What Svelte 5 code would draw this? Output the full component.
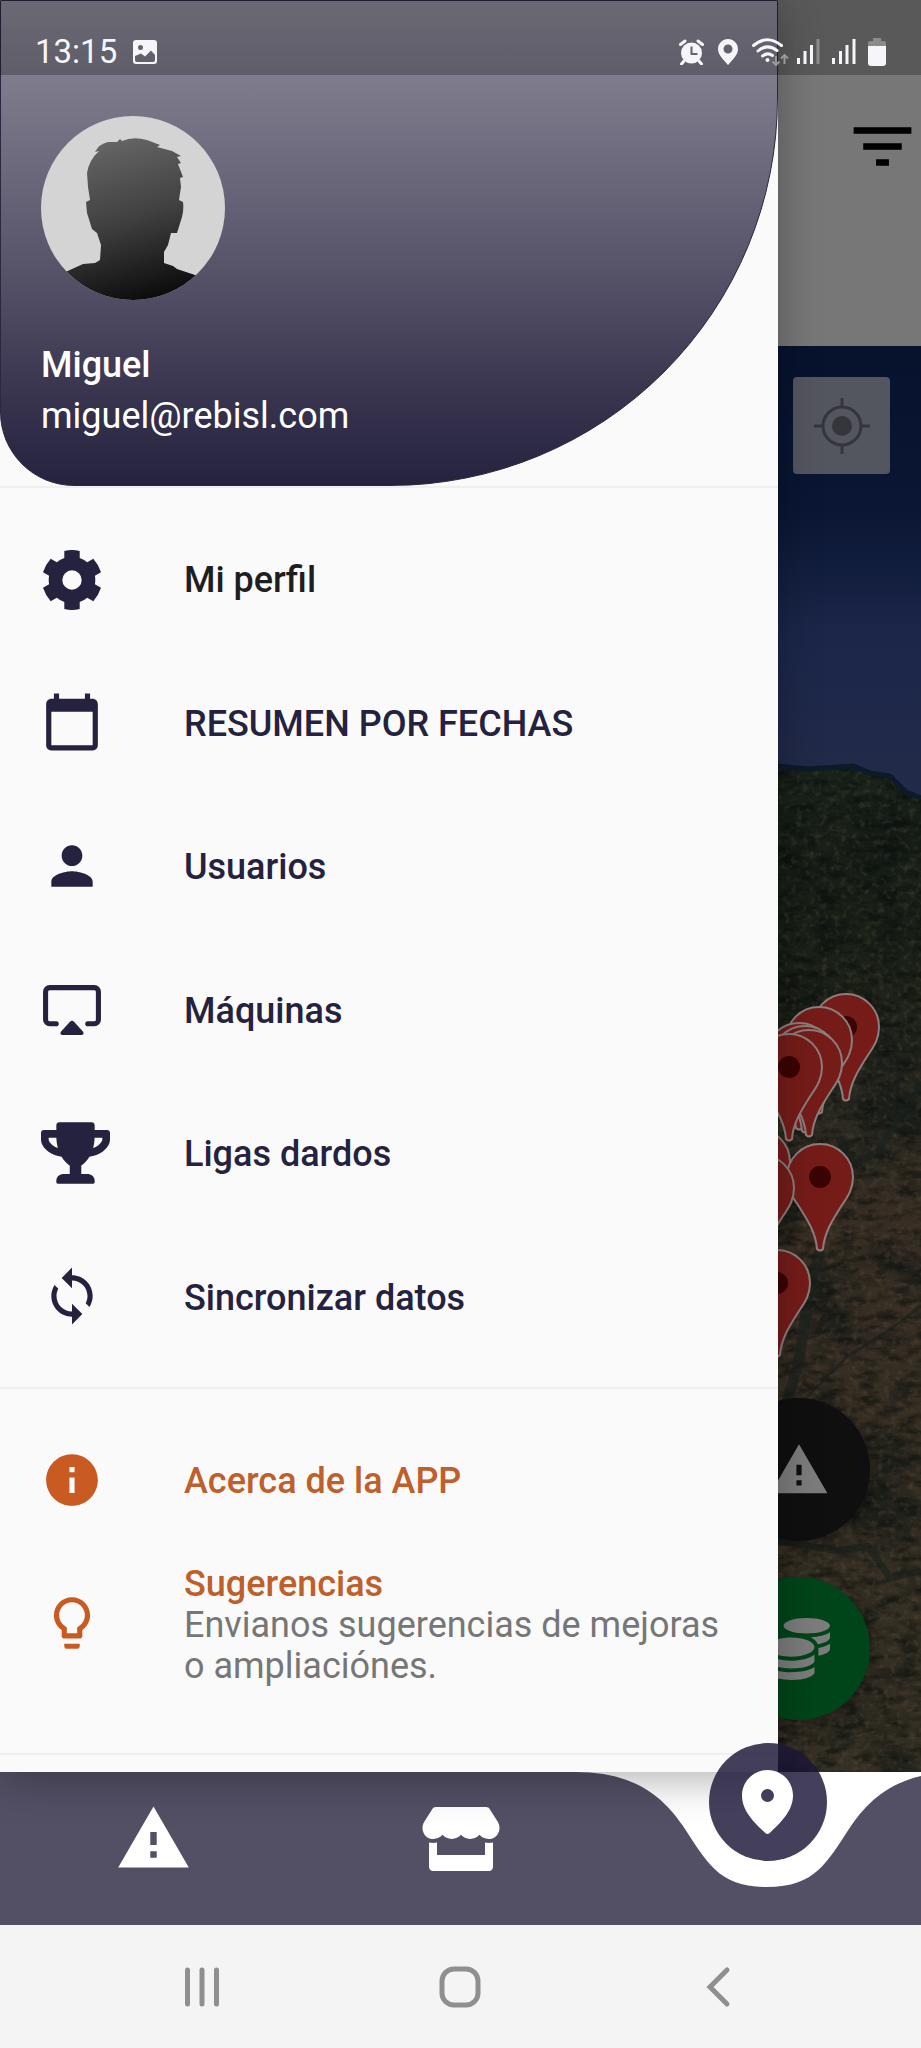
<script lang="ts">
  type Item = {
    title: string;
    icon: string;
    width?: number;
    box?: string;
    outline?: string;
    detail?: string;
    dark?: boolean;
  };

  const user = { name: 'Miguel', email: 'miguel@rebisl.com' };

  const menu: Item[] = [
    {
      title: 'Mi perfil',
      dark: true,
      box: '-1 -1 62 60',
      icon: 'M22.3 1Q30-.8 37.7 1V8A23.3 23.3 0 0 1 45.2 12.3L51.3 8.8Q56.5 14.6 59 22.2L52.9 25.7A23.3 23.3 0 0 1 52.9 34.3L59 37.8Q56.5 45.4 51.3 51.2L45.2 47.7A23.3 23.3 0 0 1 37.7 52V59Q30 60.8 22.3 59V52A23.3 23.3 0 0 1 14.8 47.7L8.7 51.2Q3.5 45.4 1 37.8L7.1 34.3A23.3 23.3 0 0 1 7.1 25.7L1 22.2Q3.5 14.6 8.7 8.8L14.8 12.3A23.3 23.3 0 0 1 22.3 8ZM30 20.3a9.7 9.7 0 1 0 0 19.4 9.7 9.7 0 0 0 0-19.4z',
    },
    {
      title: 'RESUMEN POR FECHAS',
      icon: 'M20 3h-1V1h-2v2H7V1H5v2H4c-1.1 0-2 .9-2 2v16c0 1.1.9 2 2 2h16c1.1 0 2-.9 2-2V5c0-1.1-.9-2-2-2zm0 18H4V8h16v13z',
    },
    {
      title: 'Usuarios',
      icon: 'M12 12c2.21 0 4-1.79 4-4s-1.79-4-4-4-4 1.79-4 4 1.79 4 4 4zm0 2c-2.67 0-8 1.34-8 4v2h16v-2c0-2.66-5.33-4-8-4z',
    },
    {
      title: 'Máquinas',
      box: '-2 -7 61 61',
      outline: 'M13 38H6.5a4 4 0 0 1-4-4V6.5a4 4 0 0 1 4-4h44a4 4 0 0 1 4 4V34a4 4 0 0 1-4 4H44',
      icon: 'M18.5 49Q16 48 18 45.5L26.5 36Q28.5 34 30.5 36L39 45.5Q41 48 38.5 49Z',
    },
    {
      title: 'Ligas dardos',
      width: 69,
      box: '0 0 576 512',
      icon: 'M552 64H448V24c0-13.3-10.7-24-24-24H152c-13.3 0-24 10.7-24 24v40H24C10.7 64 0 74.7 0 88v56c0 35.7 22.5 72.5 61.9 100.7 31.5 22.7 69.8 37.1 110 41.7C203.3 338.5 240 360 240 360v72h-48c-35.3 0-64 20.7-64 56v12c0 6.6 5.4 12 12 12h296c6.6 0 12-5.4 12-12v-12c0-35.3-28.7-56-64-56h-48v-72s36.7-21.5 68.1-73.6c40.3-4.6 78.6-19 110-41.7 39.3-28.2 61.9-65 61.9-100.7V88c0-13.3-10.7-24-24-24zM99.3 192.8C74.9 175.2 64 155.6 64 144v-16h64.2c1 32.6 5.8 61.2 12.8 86.2-15.1-5.2-29.2-12.4-41.7-21.4zM512 144c0 16.1-17.7 36.1-35.3 48.8-12.5 9-26.7 16.2-41.8 21.4 7-25 11.8-53.6 12.8-86.2H512v16z',
    },
    {
      title: 'Sincronizar datos',
      icon: 'M12 4V1L8 5l4 4V6c3.31 0 6 2.69 6 6 0 1.01-.25 1.97-.7 2.8l1.46 1.46C19.54 15.03 20 13.57 20 12c0-4.42-3.58-8-8-8zm0 14c-3.31 0-6-2.69-6-6 0-1.01.25-1.97.7-2.8L5.24 7.74C4.46 8.97 4 10.43 4 12c0 4.42 3.58 8 8 8v3l4-4-4-4v3z',
    },
  ];

  const about: Item[] = [
    {
      title: 'Acerca de la APP',
      icon: 'M12 2C6.48 2 2 6.48 2 12s4.48 10 10 10 10-4.48 10-10S17.52 2 12 2zm1 15h-2v-6h2v6zm0-8h-2V7h2v2z',
    },
    {
      title: 'Sugerencias',
      detail: 'Envianos sugerencias de mejoras o ampliaciónes.',
      icon: 'M9 21c0 .55.45 1 1 1h4c.55 0 1-.45 1-1v-1H9v1zm3-19C8.14 2 5 5.14 5 9c0 2.38 1.19 4.47 3 5.74V17c0 .55.45 1 1 1h6c.55 0 1-.45 1-1v-2.26c1.81-1.27 3-3.36 3-5.74 0-3.86-3.14-7-7-7zm2.85 11.1l-.85.6V16h-4v-2.3l-.85-.6C7.8 12.16 7 10.63 7 9c0-2.76 2.24-5 5-5s5 2.24 5 5c0 1.63-.8 3.16-2.15 4.1z',
    },
  ];

  // tip of each machine marker, back to front
  const pins = [
    { x: 68, y: 755 },
    { x: 41, y: 768 },
    { x: 21, y: 784 },
    { x: 27, y: 787 },
    { x: 31, y: 791 },
    { x: 11, y: 795 },
    { x: -21, y: 890 },
    { x: 42, y: 905 },
    { x: -17, y: 916 },
    { x: -1, y: 1011 },
  ];
  const pinPath =
    'M-3-2C-4-18-13-32-22-46C-29-56-33-63-33-74A33 33 0 0 1 33-74C33-63 29-56 22-46C13-32 4-18 3-2Q0 1-3-2Z';
  const warning = 'M1 21h22L12 2 1 21zm12-3h-2v-2h2v2zm0-4h-2v-4h2v4z';
</script>

{#snippet row(item: Item)}
  <li>
    <a href="#menu" class="row" class:dark={item.dark}>
      <span class="row-icon">
        <svg width={item.width ?? 62} height="62" viewBox={item.box ?? '0 0 24 24'} aria-hidden="true">
          {#if item.outline}
            <path class="line" d={item.outline} />
          {/if}
          <path fill-rule="evenodd" d={item.icon} />
        </svg>
      </span>
      <span class="row-text">
        <span class="row-title">{item.title}</span>
        {#if item.detail}
          <span class="row-detail">{item.detail}</span>
        {/if}
      </span>
    </a>
  </li>
{/snippet}

<div class="app">
  <header class="status">
    <span class="time">13:15</span>
    <svg width="24" height="24" viewBox="0 0 24 24">
      <path fill-rule="evenodd" d="M3 0h18a3 3 0 0 1 3 3v18a3 3 0 0 1-3 3H3a3 3 0 0 1-3-3V3a3 3 0 0 1 3-3zm4.5 5a2.5 2.5 0 1 0 0 5 2.5 2.5 0 0 0 0-5zM2 16v4q0 2 2 2h16q2 0 2-2v-5l-4-4.5-6 6-4-3z" />
    </svg>
    <div class="status-right">
      <svg width="27" height="26" viewBox="0 0 27 26">
        <circle cx="12.5" cy="14" r="10.5" />
        <path class="thick" d="M1.5 5.5 6 2M23.500 5.5 19 2M5 22l-2.5 3M20 22l2.5 3" />
        <path class="cut" d="M12.5 7.5v7.5h6" />
      </svg>
      <svg width="22" height="26" viewBox="0 0 22 26">
        <path fill-rule="evenodd" d="M10 0C4.5 0 0 4.5 0 10c0 6.5 6 11 10 16 4-5 10-9.500 10-16C20 4.5 15.5 0 10 0zm0 5.500a4.500 4.500 0 1 1 0 9 4.500 4.500 0 0 1 0-9z" />
      </svg>
      <svg class="wifi" width="32" height="28" viewBox="0 0 32 28">
        <path class="thick" d="M1.5 7.5Q15 -4 29.5 7.5M6 13Q15 5 25 12.5M10.500 18Q15.500 14 20.500 17.5" />
        <circle cx="15.5" cy="22" r="2" />
        <path class="faded-line" d="M24 18v9M20.500 23.500 24 27l3.500-3.500M32.500 26v-9M29 20.500 32.500 17l3.500 3.500" />
      </svg>
      <svg width="24" height="25" viewBox="0 0 24 25">
        <path d="M1 19h3v6H1zM7.5 12h3v13h-3zM14 6h3v19h-3z" />
        <path class="faded" d="M20.5 0h3v25h-3z" />
      </svg>
      <svg width="24" height="25" viewBox="0 0 24 25">
        <path d="M0 19h3v6H0zM7 12h3v13H7zM13.5 6h3v19h-3zM20.500 0h3v25h-3z" />
      </svg>
      <svg width="18" height="28" viewBox="0 0 18 28">
        <path class="faded" d="M5 0h8v3h3a2 2 0 0 1 2 2v3H0V5a2 2 0 0 1 2-2h3z" />
        <path d="M0 8h18v17a3 3 0 0 1-3 3H3a3 3 0 0 1-3-3z" />
      </svg>
    </div>
  </header>

  <div class="stage">
    <aside class="drawer">
      <div class="head">
        <div class="profile">
          <svg class="avatar" width="184" height="184" viewBox="0 0 184 184" role="img" aria-label={user.name}>
            <defs>
              <linearGradient id="skin" x1=".35" y1="0" x2=".6" y2="1">
                <stop offset="0" stop-color="#666" />
                <stop offset=".5" stop-color="#404040" />
                <stop offset="1" stop-color="#0c0c0c" />
              </linearGradient>
            </defs>
            <rect width="184" height="184" fill="#d3d4d3" />
            <path
              fill="url(#skin)"
              d="M46 57Q48 44 58 35L54 36Q58 28 67 26L76 26 79 23 81 25Q92 20 106 24L119 29 116 31 131 35 140 40 136 41 140 47 137 48 142 61 139 62 140 71 138 84 142 86Q143 94 141 101L136 117H130L127 129 123 136V147L132 150 136 153 160 161V184H20V158L42 148 54 147 59 144 60 129 56 117 51 113 46 97 45 86 49 84 47 71Z"
            />
          </svg>
          <strong>{user.name}</strong>
          <span>{user.email}</span>
        </div>
      </div>
      <ul class="menu">
        {#each menu as item}
          {@render row(item)}
        {/each}
      </ul>
      <ul class="menu about">
        {#each about as item}
          {@render row(item)}
        {/each}
      </ul>
    </aside>

    <main class="screen">
      <div class="toolbar">
        <button aria-label="Filtrar">
          <svg width="77" height="77" viewBox="0 0 24 24"><path d="M10 18h4v-2h-4v2zM3 6v2h18V6H3zm3 7h12v-2H6v2z" /></svg>
        </button>
      </div>
      <div class="map">
        <svg class="terrain" viewBox="0 0 143 1426" preserveAspectRatio="xMinYMin slice" aria-hidden="true">
          <defs>
            <linearGradient id="sea" x1="0" y1="0" x2="0" y2="1">
              <stop offset="0" stop-color="#07122d" />
              <stop offset=".35" stop-color="#0a1633" />
              <stop offset=".62" stop-color="#1b2649" />
              <stop offset="1" stop-color="#242b49" />
            </linearGradient>
            <linearGradient id="land" x1="0" y1="0" x2="0" y2="1">
              <stop offset="0" stop-color="#18221a" />
              <stop offset=".2" stop-color="#1b2117" />
              <stop offset=".32" stop-color="#26271f" />
              <stop offset=".45" stop-color="#372d23" />
              <stop offset="1" stop-color="#353024" />
            </linearGradient>
            <!-- broad dark patches, then fine relief and pale specks -->
            <filter id="patches" x="0" y="0" width="100%" height="100%" color-interpolation-filters="sRGB">
              <feTurbulence type="fractalNoise" baseFrequency=".014 .02" numOctaves="4" seed="4" />
              <feColorMatrix values="0 0 0 0 .06  0 0 0 0 .09  0 0 0 0 .08  4 0 0 0 -1.9" />
            </filter>
            <filter id="relief" x="0" y="0" width="100%" height="100%" color-interpolation-filters="sRGB">
              <feTurbulence type="fractalNoise" baseFrequency=".05 .12" numOctaves="5" seed="8" />
              <feColorMatrix values="0 0 0 0 .03  0 0 0 0 .05  0 0 0 0 .04  2.6 0 0 0 -1.1" />
            </filter>
            <filter id="specks" x="0" y="0" width="100%" height="100%" color-interpolation-filters="sRGB">
              <feTurbulence type="fractalNoise" baseFrequency=".16" numOctaves="4" seed="21" />
              <feColorMatrix values="0 0 0 0 .42  0 0 0 0 .36  0 0 0 0 .28  0 2.4 0 0 -1.2" />
            </filter>
            <clipPath id="coast">
              <path d="M0 420 30 423 75 420 92 427 112 430 128 446 143 452V1426H0Z" />
            </clipPath>
          </defs>
          <rect width="143" height="460" fill="url(#sea)" />
          <g clip-path="url(#coast)">
            <rect y="415" width="143" height="1011" fill="url(#land)" />
            <rect y="415" width="143" height="1011" filter="url(#patches)" opacity=".55" />
            <rect y="415" width="143" height="1011" filter="url(#relief)" opacity=".6" />
            <rect y="415" width="143" height="1011" filter="url(#specks)" opacity=".35" />
          </g>
          <path d="M0 420 30 423 75 420 92 427 112 430 128 446 143 452" fill="none" stroke="#0c1a29" stroke-width="5" />
          <g fill="none" stroke="#18201c" stroke-linejoin="round" opacity=".6">
            <path stroke-width="11" d="M42 905 30 950 22 1010 8 1060 0 1080" />
            <path stroke-width="7" d="M60 790 74 820 100 805 143 740M0 1195 60 1205 90 1200 112 1232 143 1225" />
            <path stroke-width="3" d="M20 1060 70 1010 110 985 143 960" />
          </g>
          {#each pins as pin}
            <g transform="translate({pin.x} {pin.y})">
              <path d={pinPath} fill="#751c19" stroke="#8b7e7d" stroke-width="2" />
              <circle cy="-74" r="11" fill="#3b0303" />
            </g>
          {/each}
        </svg>
        <button class="locate" aria-label="Mi ubicación">
          <svg width="56" height="56" viewBox="0 0 56 56">
            <circle cx="28" cy="28" r="10" />
            <path fill="none" stroke="#35363b" stroke-width="3" d="M28 0v9M28 47v9M0 28h9M47 28h9M28 9a19 19 0 1 0 0 38 19 19 0 0 0 0-38z" />
          </svg>
        </button>
        <button class="fab" aria-label="Averías">
          <svg width="62" height="62" viewBox="0 0 24 24"><path d={warning} /></svg>
        </button>
        <button class="fab green" aria-label="Recaudaciones">
          <svg width="62" height="62" viewBox="0 0 512 512">
            <path d="M0 405.3V448c0 35.3 86 64 192 64s192-28.7 192-64v-42.7C342.7 434.4 267.2 448 192 448S41.3 434.4 0 405.3zM320 128c106 0 192-28.7 192-64S426 0 320 0 128 28.7 128 64s86 64 192 64zM0 300.4V352c0 35.3 86 64 192 64s192-28.7 192-64v-51.6c-41.3 34-116.9 51.6-192 51.6S41.3 334.4 0 300.4zm416 11c57.3-11.1 96-31.7 96-55.4v-42.7c-23.2 16.4-57.3 27.6-96 34.5v63.6zM192 160C86 160 0 195.8 0 240s86 80 192 80 192-35.8 192-80-86-80-192-80zm219.3 56.3c60-10.8 100.7-32 100.7-56.3v-42.7c-35.5 25.1-96.5 38.6-160.7 41.8 29.5 14.3 51.2 33.5 60 57.2z" />
          </svg>
        </button>
      </div>
    </main>
  </div>

  <nav class="tabs">
    <svg class="tabs-bg" viewBox="0 0 921 153" preserveAspectRatio="none" aria-hidden="true">
      <path d="M0 0H575C632 0 661 22 683 54C707 90 718 115 767 115S827 90 851 54C873 22 902 0 959 0V153H0Z" />
    </svg>
    <button aria-label="Averías">
      <svg width="77" height="77" viewBox="0 0 24 24"><path d={warning} /></svg>
    </button>
    <button aria-label="Locales">
      <svg width="78" height="64" viewBox="0 0 616 512">
        <path d="M602 118.6L537.1 15C531.3 5.7 521 0 510 0H106C95 0 84.7 5.7 78.9 15L14 118.6c-33.5 53.5-3.8 127.9 58.8 136.4 4.5.6 9.1.9 13.7.9 29.6 0 55.8-13 73.8-33.1 18 20.1 44.3 33.1 73.8 33.1 29.6 0 55.8-13 73.8-33.1 18 20.1 44.3 33.1 73.8 33.1 29.6 0 55.8-13 73.8-33.1 18.1 20.1 44.3 33.1 73.8 33.1 4.7 0 9.2-.3 13.7-.9 62.8-8.4 92.6-82.8 59-136.4zM529.5 288c-10 0-19.9-1.5-29.5-3.8V384H116v-99.8c-9.6 2.2-19.5 3.8-29.5 3.8-6 0-12.1-.4-18-1.2-5.6-.8-11.1-2.1-16.4-3.6V480c0 17.7 14.3 32 32 32h448c17.7 0 32-14.3 32-32V283.2c-5.4 1.6-10.8 2.9-16.4 3.6-6.1.8-12.1 1.2-18.2 1.2z" />
      </svg>
    </button>
    <button class="current" aria-label="Mapa">
      <svg width="51" height="64" viewBox="0 0 51 64">
        <path fill-rule="evenodd" d="M25.5 0C11.4 0 0 11.4 0 25.5 0 42 14 54 23.5 63.2q2 1.6 4 0C37 54 51 42 51 25.5 51 11.4 39.6 0 25.5 0zm0 19a6.5 6.5 0 1 1 0 13 6.5 6.5 0 0 1 0-13z" />
      </svg>
    </button>
  </nav>

  <footer class="system">
    <button aria-label="Recientes">
      <svg width="42" height="42" viewBox="0 0 42 42"><path d="M6.5 4v34M21 4v34M35.5 4v34" /></svg>
    </button>
    <button aria-label="Inicio">
      <svg width="42" height="42" viewBox="0 0 42 42"><rect x="3" y="3" width="36" height="36" rx="12" /></svg>
    </button>
    <button aria-label="Atrás">
      <svg width="42" height="42" viewBox="0 0 42 42"><path d="M29 4 12 21l17 17" /></svg>
    </button>
  </footer>
</div>

<style>
:global(body) {
  margin: 0;
  background: #fff;
}

.app {
  position: relative;
  display: flex;
  flex-direction: column;
  min-height: 100vh;
  font-family: Roboto, "Liberation Sans", sans-serif;
  font-size: 36px;
}

button {
  display: flex;
  align-items: center;
  justify-content: center;
  padding: 0;
  border: 0;
  background: none;
}

svg {
  display: block;
  flex: none;
}

/* status bar lies over the drawer */
.status {
  position: absolute;
  inset: 0 0 auto;
  z-index: 3;
  display: flex;
  align-items: center;
  gap: 16px;
  box-sizing: border-box;
  height: 75px;
  padding: 28px 35px 0;
  background: rgba(0, 0, 0, .25);
  color: #f6f5fa;
  fill: #f6f5fa;
}

.time {
  font-size: 33px;
}

.status-right {
  display: flex;
  align-items: center;
  gap: 12px;
  margin-left: auto;
}

.thick {
  fill: none;
  stroke: #f6f5fa;
  stroke-width: 3;
  stroke-linecap: round;
}

.cut {
  fill: none;
  stroke: #63626e;
  stroke-width: 2;
}

.faded {
  fill: #8b8b8c;
}

.faded-line {
  fill: none;
  stroke: #99989d;
  stroke-width: 2;
}

.wifi {
  overflow: visible;
}

.stage {
  display: flex;
  flex: 1;
}

.drawer {
  position: relative;
  z-index: 1;
  flex: 1;
  display: flex;
  flex-direction: column;
  background: #fafafa;
  box-shadow: 0 8px 40px rgba(0, 0, 0, .3);
}

.head {
  border-bottom: 2px solid #eeefee;
}

.profile {
  display: flex;
  flex-direction: column;
  box-sizing: border-box;
  height: 486px;
  padding: 115px 40px 0;
  border: 1px solid #2a2740;
  border-radius: 0 0 388px 74px;
  background: linear-gradient(#8e8c9a, #57546a 55%, #3b3751 79%, #25223f);
  color: #fff;
  line-height: 51px;
}

.profile strong {
  margin-top: 40px;
  font-weight: 500;
}

.avatar {
  border-radius: 50%;
}

.menu {
  display: grid;
  grid-auto-rows: 1fr;
  min-height: 861px;
  margin: 0;
  padding: 19px 0;
  border-bottom: 2px solid #eeefee;
  list-style: none;
}

.about {
  min-height: 287px;
  padding: 19px 0 58px;
}

.row {
  display: flex;
  align-items: center;
  gap: 81px;
  height: 100%;
  padding: 0 41px;
  color: #25223f;
  fill: #25223f;
  line-height: 41px;
  text-decoration: none;
}

.dark {
  color: #1e1e20;
}

.about :global(.row) {
  color: #bf5f2b;
  fill: #c95a22;
}

.row-icon {
  width: 62px;
  flex: none;
}

.line {
  fill: none;
  stroke: #25223f;
  stroke-width: 5;
  stroke-linecap: round;
}

.row-text {
  display: flex;
  flex-direction: column;
  padding-top: 4px;
}

.row-title {
  font-weight: 500;
}

.row-detail {
  color: #767676;
}

.screen {
  display: flex;
  flex-direction: column;
  width: 143px;
  background: #777;
}

.toolbar {
  display: flex;
  align-items: flex-start;
  justify-content: flex-end;
  box-sizing: border-box;
  height: 346px;
  padding-top: 108px;
}

.map {
  position: relative;
  flex: 1;
  display: flex;
  flex-direction: column;
  align-items: flex-start;
  overflow: hidden;
  background: #2b281f;
}

.terrain {
  position: absolute;
  inset: 0;
  width: 100%;
  height: 100%;
}

.locate {
  position: relative;
  width: 97px;
  height: 97px;
  margin: 31px 15px auto;
  border-radius: 4px;
  background: #54565f;
  fill: #35363b;
}

/* both round buttons reach under the drawer */
.fab {
  position: relative;
  width: 143px;
  height: 143px;
  margin: 0 0 36px -51px;
  border-radius: 50%;
  background: #0f0f0f;
  box-shadow: 0 6px 16px rgba(0, 0, 0, .35);
  fill: #7c7c7c;
}

.green {
  margin-bottom: 52px;
  background: #004519;
}

.tabs {
  position: relative;
  display: grid;
  grid-template-columns: repeat(3, 1fr);
  height: 153px;
  background: #fff;
  fill: #fff;
}

.tabs-bg {
  position: absolute;
  inset: 0;
  width: 100%;
  height: 100%;
  fill: #535066;
}

.tabs button {
  position: relative;
  padding-bottom: 20px;
}

.tabs .current {
  z-index: 2;
  justify-self: center;
  width: 118px;
  height: 118px;
  margin-top: -29px;
  padding: 0;
  border-radius: 50%;
  background: rgba(27, 21, 54, .82);
}

.system {
  display: grid;
  grid-template-columns: repeat(3, 1fr);
  height: 123px;
  padding: 0 73px;
  background: #f4f4f4;
}

.system svg {
  fill: none;
  stroke: #8f8f8f;
  stroke-width: 5;
  stroke-linecap: round;
}
</style>
